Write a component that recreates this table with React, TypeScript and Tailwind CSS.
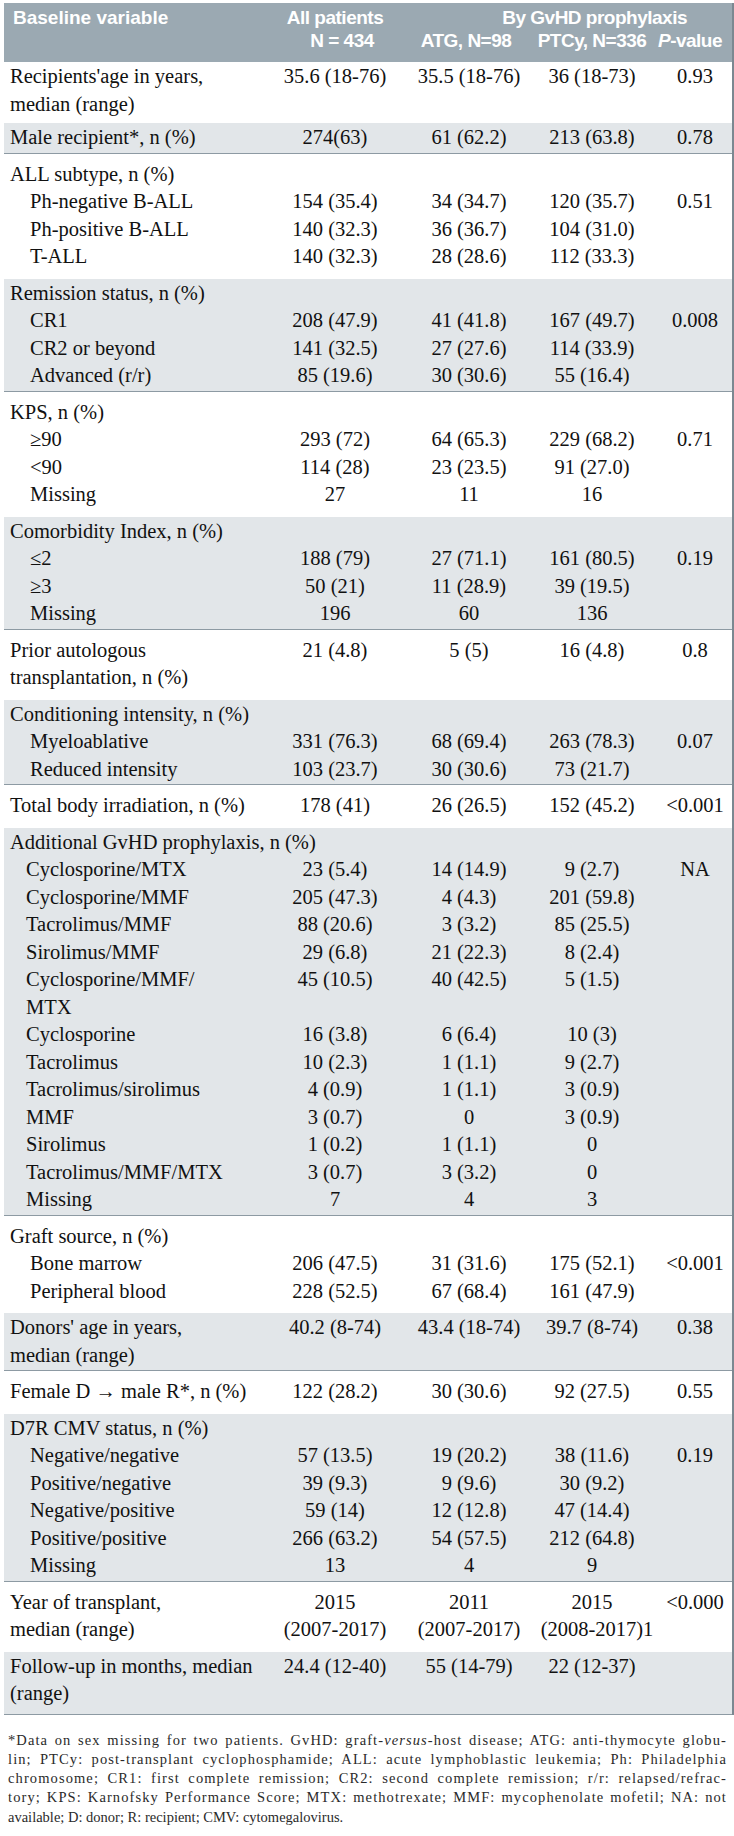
import React from "react";

type Line = { t: React.ReactNode; ind?: number; v?: React.ReactNode[] };
type Row = { g?: boolean; lines: Line[] };

const rows: Row[] = [
  {
    lines: [
      { t: "Recipients'age in years,", v: ["35.6 (18-76)", "35.5 (18-76)", "36 (18-73)", "0.93"] },
      { t: "median (range)" },
    ],
  },
  {
    g: true,
    lines: [{ t: "Male recipient*, n (%)", v: ["274(63)", "61 (62.2)", "213 (63.8)", "0.78"] }],
  },
  {
    lines: [
      { t: "ALL subtype, n (%)" },
      { t: "Ph-negative B-ALL", ind: 1, v: ["154 (35.4)", "34 (34.7)", "120 (35.7)", "0.51"] },
      { t: "Ph-positive B-ALL", ind: 1, v: ["140 (32.3)", "36 (36.7)", "104 (31.0)"] },
      { t: "T-ALL", ind: 1, v: ["140 (32.3)", "28 (28.6)", "112 (33.3)"] },
    ],
  },
  {
    g: true,
    lines: [
      { t: "Remission status, n (%)" },
      { t: "CR1", ind: 1, v: ["208 (47.9)", "41 (41.8)", "167 (49.7)", "0.008"] },
      { t: "CR2 or beyond", ind: 1, v: ["141 (32.5)", "27 (27.6)", "114 (33.9)"] },
      { t: "Advanced (r/r)", ind: 1, v: ["85 (19.6)", "30 (30.6)", "55 (16.4)"] },
    ],
  },
  {
    lines: [
      { t: "KPS, n (%)" },
      { t: "\u226590", ind: 1, v: ["293 (72)", "64 (65.3)", "229 (68.2)", "0.71"] },
      { t: "<90", ind: 1, v: ["114 (28)", "23 (23.5)", "91 (27.0)"] },
      { t: "Missing", ind: 1, v: ["27", "11", "16"] },
    ],
  },
  {
    g: true,
    lines: [
      { t: "Comorbidity Index, n (%)" },
      { t: "\u22642", ind: 1, v: ["188 (79)", "27 (71.1)", "161 (80.5)", "0.19"] },
      { t: "\u22653", ind: 1, v: ["50 (21)", "11 (28.9)", "39 (19.5)"] },
      { t: "Missing", ind: 1, v: ["196", "60", "136"] },
    ],
  },
  {
    lines: [
      { t: "Prior autologous", v: ["21 (4.8)", "5 (5)", "16 (4.8)", "0.8"] },
      { t: "transplantation, n (%)" },
    ],
  },
  {
    g: true,
    lines: [
      { t: "Conditioning intensity, n (%)" },
      { t: "Myeloablative", ind: 1, v: ["331 (76.3)", "68 (69.4)", "263 (78.3)", "0.07"] },
      { t: "Reduced intensity", ind: 1, v: ["103 (23.7)", "30 (30.6)", "73 (21.7)"] },
    ],
  },
  {
    lines: [{ t: "Total body irradiation, n (%)", v: ["178 (41)", "26 (26.5)", "152 (45.2)", "<0.001"] }],
  },
  {
    g: true,
    lines: [
      { t: "Additional GvHD prophylaxis, n (%)" },
      { t: "Cyclosporine/MTX", ind: 2, v: ["23 (5.4)", "14 (14.9)", "9 (2.7)", "NA"] },
      { t: "Cyclosporine/MMF", ind: 2, v: ["205 (47.3)", "4 (4.3)", "201 (59.8)"] },
      { t: "Tacrolimus/MMF", ind: 2, v: ["88 (20.6)", "3 (3.2)", "85 (25.5)"] },
      { t: "Sirolimus/MMF", ind: 2, v: ["29 (6.8)", "21 (22.3)", "8 (2.4)"] },
      { t: "Cyclosporine/MMF/", ind: 2, v: ["45 (10.5)", "40 (42.5)", "5 (1.5)"] },
      { t: "MTX", ind: 2 },
      { t: "Cyclosporine", ind: 2, v: ["16 (3.8)", "6 (6.4)", "10 (3)"] },
      { t: "Tacrolimus", ind: 2, v: ["10 (2.3)", "1 (1.1)", "9 (2.7)"] },
      { t: "Tacrolimus/sirolimus", ind: 2, v: ["4 (0.9)", "1 (1.1)", "3 (0.9)"] },
      { t: "MMF", ind: 2, v: ["3 (0.7)", "0", "3 (0.9)"] },
      { t: "Sirolimus", ind: 2, v: ["1 (0.2)", "1 (1.1)", "0"] },
      { t: "Tacrolimus/MMF/MTX", ind: 2, v: ["3 (0.7)", "3 (3.2)", "0"] },
      { t: "Missing", ind: 2, v: ["7", "4", "3"] },
    ],
  },
  {
    lines: [
      { t: "Graft source, n (%)" },
      { t: "Bone marrow", ind: 1, v: ["206 (47.5)", "31 (31.6)", "175 (52.1)", "<0.001"] },
      { t: "Peripheral blood", ind: 1, v: ["228 (52.5)", "67 (68.4)", "161 (47.9)"] },
    ],
  },
  {
    g: true,
    lines: [
      { t: "Donors' age in years,", v: ["40.2 (8-74)", "43.4 (18-74)", "39.7 (8-74)", "0.38"] },
      { t: "median (range)" },
    ],
  },
  {
    lines: [{ t: "Female D \u2192 male R*, n (%)", v: ["122 (28.2)", "30 (30.6)", "92 (27.5)", "0.55"] }],
  },
  {
    g: true,
    lines: [
      { t: "D7R CMV status, n (%)" },
      { t: "Negative/negative", ind: 1, v: ["57 (13.5)", "19 (20.2)", "38 (11.6)", "0.19"] },
      { t: "Positive/negative", ind: 1, v: ["39 (9.3)", "9 (9.6)", "30 (9.2)"] },
      { t: "Negative/positive", ind: 1, v: ["59 (14)", "12 (12.8)", "47 (14.4)"] },
      { t: "Positive/positive", ind: 1, v: ["266 (63.2)", "54 (57.5)", "212 (64.8)"] },
      { t: "Missing", ind: 1, v: ["13", "4", "9"] },
    ],
  },
  {
    lines: [
      { t: "Year of transplant,", v: ["2015", "2011", "2015", "<0.000"] },
      {
        t: "median (range)",
        v: [
          "(2007-2017)",
          "(2007-2017)",
          <>
            (2008-2017)<span className="-mr-[10px]">1</span>
          </>,
        ],
      },
    ],
  },
  {
    g: true,
    lines: [
      { t: "Follow-up in months, median", v: ["24.4 (12-40)", "55 (14-79)", "22 (12-37)"] },
      { t: "(range)" },
    ],
  },
];

const COLS = "grid grid-cols-[264px_134px_134px_112px_84px]";

function LineRow({ line }: { line: Line }) {
  const pl = line.ind === 1 ? "pl-[26px]" : line.ind === 2 ? "pl-[22px]" : "pl-[6px]";
  const v = line.v ?? [];
  return (
    <div className={`${COLS} h-[27.5px] leading-[27.5px]`}>
      <div className={`${pl} whitespace-nowrap`}>{line.t}</div>
      <div className="whitespace-nowrap text-center">{v[0]}</div>
      <div className="whitespace-nowrap text-center">{v[1]}</div>
      <div className="whitespace-nowrap text-center">{v[2]}</div>
      <div className="whitespace-nowrap pl-[10px] text-center">{v[3]}</div>
    </div>
  );
}

function rowClass(r: Row, i: number, last: boolean) {
  if (i === 0) return "pb-[5px] pt-[1px]";
  if (last) return "border-b border-[#8d9aa3] bg-[#e2e6e9] pb-[6px] pt-[1px]";
  if (r.g) return "border-b border-[#8d9aa3] bg-[#e2e6e9] pb-[1px] pt-[1px]";
  return "pb-[8px] pt-[7px]";
}

const FOOT_LINE = "text-justify tracking-[1.1px] [text-align-last:justify]";

export default function App() {
  return (
    <div className="min-h-[1836px] w-[734px] bg-white">
      <div className="ml-[4px] mt-[3px] w-[730px] border-r-2 border-[#7b8891]">
        <div className="bg-[#9ba9b2] pb-[10px] pt-[3px] font-['Liberation_Sans',Arial,sans-serif] text-[19px] font-bold leading-[23px] tracking-[-0.5px] text-white">
          <div className={COLS}>
            <div className="whitespace-nowrap pl-[9px] tracking-[0px]">Baseline variable</div>
            <div className="whitespace-nowrap text-center">All patients</div>
            <div className="col-span-3 whitespace-nowrap pr-[45px] text-right">By GvHD prophylaxis</div>
          </div>
          <div className={COLS}>
            <div />
            <div className="whitespace-nowrap pl-[14px] text-center">N = 434</div>
            <div className="whitespace-nowrap pr-[6px] text-center">ATG, N=98</div>
            <div className="whitespace-nowrap text-center">PTCy, N=336</div>
            <div className="whitespace-nowrap text-center">
              <span className="italic">P</span>-value
            </div>
          </div>
        </div>
        <div className="font-['Liberation_Serif','Times_New_Roman',serif] text-[20.5px] text-[#111]">
          {rows.map((r, i) => (
            <div key={i} className={rowClass(r, i, i === rows.length - 1)}>
              {r.lines.map((l, j) => (
                <LineRow key={j} line={l} />
              ))}
            </div>
          ))}
        </div>
      </div>
      <div className="pl-[8px] pr-[7px] pt-[16px] font-['Liberation_Serif','Times_New_Roman',serif] text-[14.5px] leading-[19.3px] text-[#2a2a2a]">
        <div className={FOOT_LINE}>
          *Data on sex missing for two patients. GvHD: graft-<span className="italic">versus</span>-host disease; ATG: anti-thymocyte globu-
        </div>
        <div className={FOOT_LINE}>
          lin; PTCy: post-transplant cyclophosphamide; ALL: acute lymphoblastic leukemia; Ph: Philadelphia
        </div>
        <div className={FOOT_LINE}>
          chromosome; CR1: first complete remission; CR2: second complete remission; r/r: relapsed/refrac-
        </div>
        <div className={FOOT_LINE}>
          tory; KPS: Karnofsky Performance Score; MTX: methotrexate; MMF: mycophenolate mofetil; NA: not
        </div>
        <div>available; D: donor; R: recipient; CMV: cytomegalovirus.</div>
      </div>
    </div>
  );
}
